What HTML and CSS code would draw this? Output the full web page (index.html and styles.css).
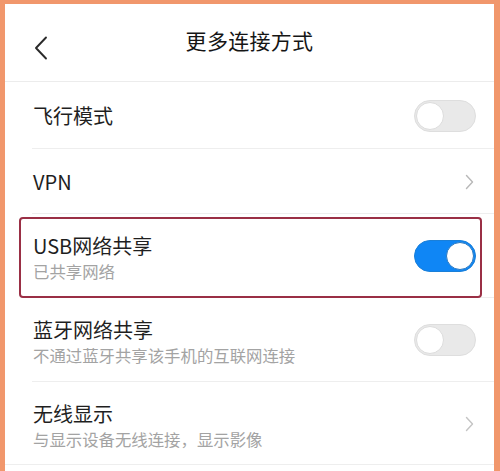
FILE: index.html
```html
<!DOCTYPE html>
<html lang="zh-CN">
<head>
<meta charset="utf-8">
<title>更多连接方式</title>
<link rel="stylesheet" href="styles.css">
</head>
<body>
<div class="frame">
  <div class="screen">
    <header class="header">
      <svg class="back" width="14" height="24" viewBox="0 0 14 24"><path d="M12 1.5 L2 12 L12 22.5" fill="none" stroke="#2a2a2a" stroke-width="1.9" stroke-linecap="round" stroke-linejoin="round"/></svg>
      <h1 class="title">更多连接方式</h1>
    </header>
    <ul class="list">
      <li class="row row-single">
        <div class="text"><div class="label">飞行模式</div></div>
        <span class="switch"><span class="knob"></span></span>
      </li>
      <li class="row row-single row-vpn">
        <div class="text"><div class="label">VPN</div></div>
        <svg class="chev" width="9" height="16" viewBox="0 0 9 16"><path d="M1.5 1.5 L7.5 8 L1.5 14.5" fill="none" stroke="#b8b8b8" stroke-width="1.4" stroke-linecap="round" stroke-linejoin="round"/></svg>
      </li>
      <li class="row row-double row-highlight">
        <span class="highlight"></span>
        <div class="text"><div class="label">USB网络共享</div><div class="sub">已共享网络</div></div>
        <span class="switch on"><span class="knob"></span></span>
      </li>
      <li class="row row-double">
        <div class="text"><div class="label">蓝牙网络共享</div><div class="sub">不通过蓝牙共享该手机的互联网连接</div></div>
        <span class="switch"><span class="knob"></span></span>
      </li>
      <li class="row row-double row-last">
        <div class="text"><div class="label">无线显示</div><div class="sub">与显示设备无线连接，显示影像</div></div>
        <svg class="chev" width="9" height="16" viewBox="0 0 9 16"><path d="M1.5 1.5 L7.5 8 L1.5 14.5" fill="none" stroke="#c4c4c4" stroke-width="1.4" stroke-linecap="round" stroke-linejoin="round"/></svg>
      </li>
    </ul>
  </div>
</div>
</body>
</html>
```
FILE: styles.css
```css
* { box-sizing: border-box; }
html, body {
  margin: 0;
  padding: 0;
  width: 500px;
  height: 471px;
  overflow: hidden;
  background: #ffffff;
}
.frame {
  width: 500px;
  height: 471px;
  background: #f1976c;
  padding: 4px 6px 0 5px;
}
.screen {
  background: #ffffff;
  height: 100%;
  font-family: "Noto Sans CJK SC", "Noto Sans", sans-serif;
  color: #1f1f1f;
}
.header {
  height: 78px;
  position: relative;
  display: flex;
  align-items: center;
  justify-content: center;
  border-bottom: 1px solid #ececec;
}
.back {
  position: absolute;
  left: 29px;
  top: 32px;
}
.title {
  margin: 0;
  font-size: 21px;
  font-weight: 400;
  line-height: 28px;
  margin-top: -6px;
  color: #151515;
  letter-spacing: 0.3px;
}
.list {
  list-style: none;
  margin: 0;
  padding: 0;
}
.row {
  position: relative;
  display: flex;
  align-items: center;
  justify-content: space-between;
  padding: 0 18px 0 28px;
}
.row::after {
  content: "";
  position: absolute;
  left: 27px;
  right: 0;
  bottom: 0;
  height: 1px;
  background: #eeeeee;
}
.row-single { height: 67px; }
.row-vpn { height: 65px; padding-right: 20px; }
.row-double { height: 84px; }
.row-last { height: 83px; padding-right: 20px; }
.row-last::after { left: 0; }
.label {
  font-size: 20px;
  line-height: 26px;
  color: #1f1f1f;
}
.sub {
  font-size: 16.4px;
  line-height: 22px;
  margin-top: 1px;
  color: #a3a3a3;
}
.row-double .text { padding-top: 3px; }
.switch {
  position: relative;
  width: 62px;
  height: 32px;
  border-radius: 16px;
  background: #e9e9e9;
  border: 1px solid #dedede;
  flex: none;
}
.switch .knob {
  position: absolute;
  top: 1px;
  left: 1px;
  width: 28px;
  height: 28px;
  border-radius: 50%;
  background: #ffffff;
  border: 1px solid #dcdcdc;
}
.switch.on {
  background: #0f86f5;
  border-color: #1a7fd8;
}
.switch.on .knob {
  left: auto;
  right: 1px;
  border-color: #2a78c0;
}
.chev { flex: none; }
.highlight {
  position: absolute;
  left: 14px;
  right: 12px;
  top: 3px;
  bottom: 0;
  border: 2px solid #9a2f45;
  border-radius: 4px;
  z-index: 1;
}
```
